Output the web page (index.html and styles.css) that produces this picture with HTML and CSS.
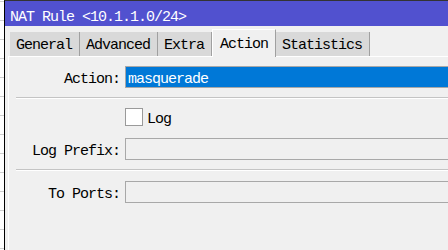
FILE: index.html
```html
<!DOCTYPE html>
<html>
<head>
<meta charset="utf-8">
<link rel="stylesheet" href="styles.css">
</head>
<body>
<div class="screen">
  <div class="backdrop"></div>
  <div class="window">
    <div class="titlebar">NAT Rule &lt;10.1.1.0/24&gt;</div>
    <div class="tabs">
      <div class="tab">General</div>
      <div class="tab">Advanced</div>
      <div class="tab">Extra</div>
      <div class="tab active">Action</div>
      <div class="tab">Statistics</div>
    </div>
    <div class="panel">
      <div class="row">
        <span class="label">Action:</span>
        <div class="field selected">masquerade</div>
      </div>
      <div class="sep"></div>
      <div class="row check-row">
        <span class="check"></span>
        <span class="check-label">Log</span>
      </div>
      <div class="row prefix-row">
        <span class="label">Log Prefix:</span>
        <div class="field"></div>
      </div>
      <div class="sep"></div>
      <div class="row ports-row">
        <span class="label">To Ports:</span>
        <div class="field"></div>
      </div>
    </div>
  </div>
</div>
</body>
</html>
```

FILE: styles.css
```css
html, body {
  margin: 0;
  padding: 0;
}
body {
  width: 448px;
  height: 250px;
  overflow: hidden;
  background: #f0f0f0;
  font-family: "Liberation Mono", "DejaVu Sans Mono", monospace;
  font-size: 15px;
  letter-spacing: -1px;
  color: #000;
}
.screen {
  display: flex;
  height: 250px;
}
.backdrop {
  width: 4px;
  flex: none;
  background-color: #fff;
  background-image: repeating-linear-gradient(to bottom, #cfcfcf 0, #cfcfcf 1px, transparent 1px, transparent 19px);
  background-position: 0 1px;
}
.window {
  flex: 1;
  min-width: 0;
  display: flex;
  flex-direction: column;
  border-left: 1px solid #000;
  border-top: 1px solid #333;
  background: #f0f0f0;
}
.titlebar {
  height: 25px;
  box-sizing: border-box;
  padding: 8px 0 0 5px;
  line-height: 17px;
  background: #5151cf;
  color: #fff;
  white-space: nowrap;
}
.tabs {
  height: 30px;
  display: flex;
  align-items: flex-end;
  padding-left: 5px;
}
.tab {
  height: 24px;
  box-sizing: border-box;
  padding: 4px 7px 0 6px;
  line-height: 20px;
  background: #d9d9d9;
  border-right: 1px solid #a0a0a0;
  white-space: nowrap;
}
.tab.active {
  position: relative;
  z-index: 1;
  height: 28px;
  margin-bottom: -1px;
  padding: 5px 7px 0 7px;
  background: #f0f0f0;
  border-top: 1px solid #fff;
  border-left: 1px solid #fff;
}
.panel {
  flex: 1;
  margin-left: 3px;
  border-top: 1px solid #fff;
  border-left: 1px solid #fff;
  padding-top: 9px;
}
.row {
  display: flex;
  align-items: flex-start;
  height: 22px;
}
.label {
  width: 111px;
  flex: none;
  text-align: right;
  margin-right: 5px;
  padding-top: 3px;
  line-height: 22px;
  white-space: nowrap;
}
.field {
  flex: 1;
  height: 22px;
  box-sizing: border-box;
  border: 1px solid #a8a8a8;
  border-right: none;
  background: #f0f0f0;
  padding: 5px 0 0 2px;
  line-height: 16px;
  white-space: nowrap;
}
.field.selected {
  background: #0078d7;
  color: #fff;
}
.sep {
  margin: 9px 0 0 7px;
  border-top: 1px solid #c4c4c4;
  border-bottom: 1px solid #fff;
}
.check-row {
  height: 18px;
  margin-top: 9px;
  padding-left: 116px;
}
.check {
  width: 18px;
  height: 18px;
  flex: none;
  box-sizing: border-box;
  border: 1px solid #9a9a9a;
  background: #fff;
  margin-right: 4px;
}
.check-label {
  padding-top: 3px;
  line-height: 18px;
}
.prefix-row {
  margin-top: 12px;
}
.ports-row {
  margin-top: 10px;
}
```
